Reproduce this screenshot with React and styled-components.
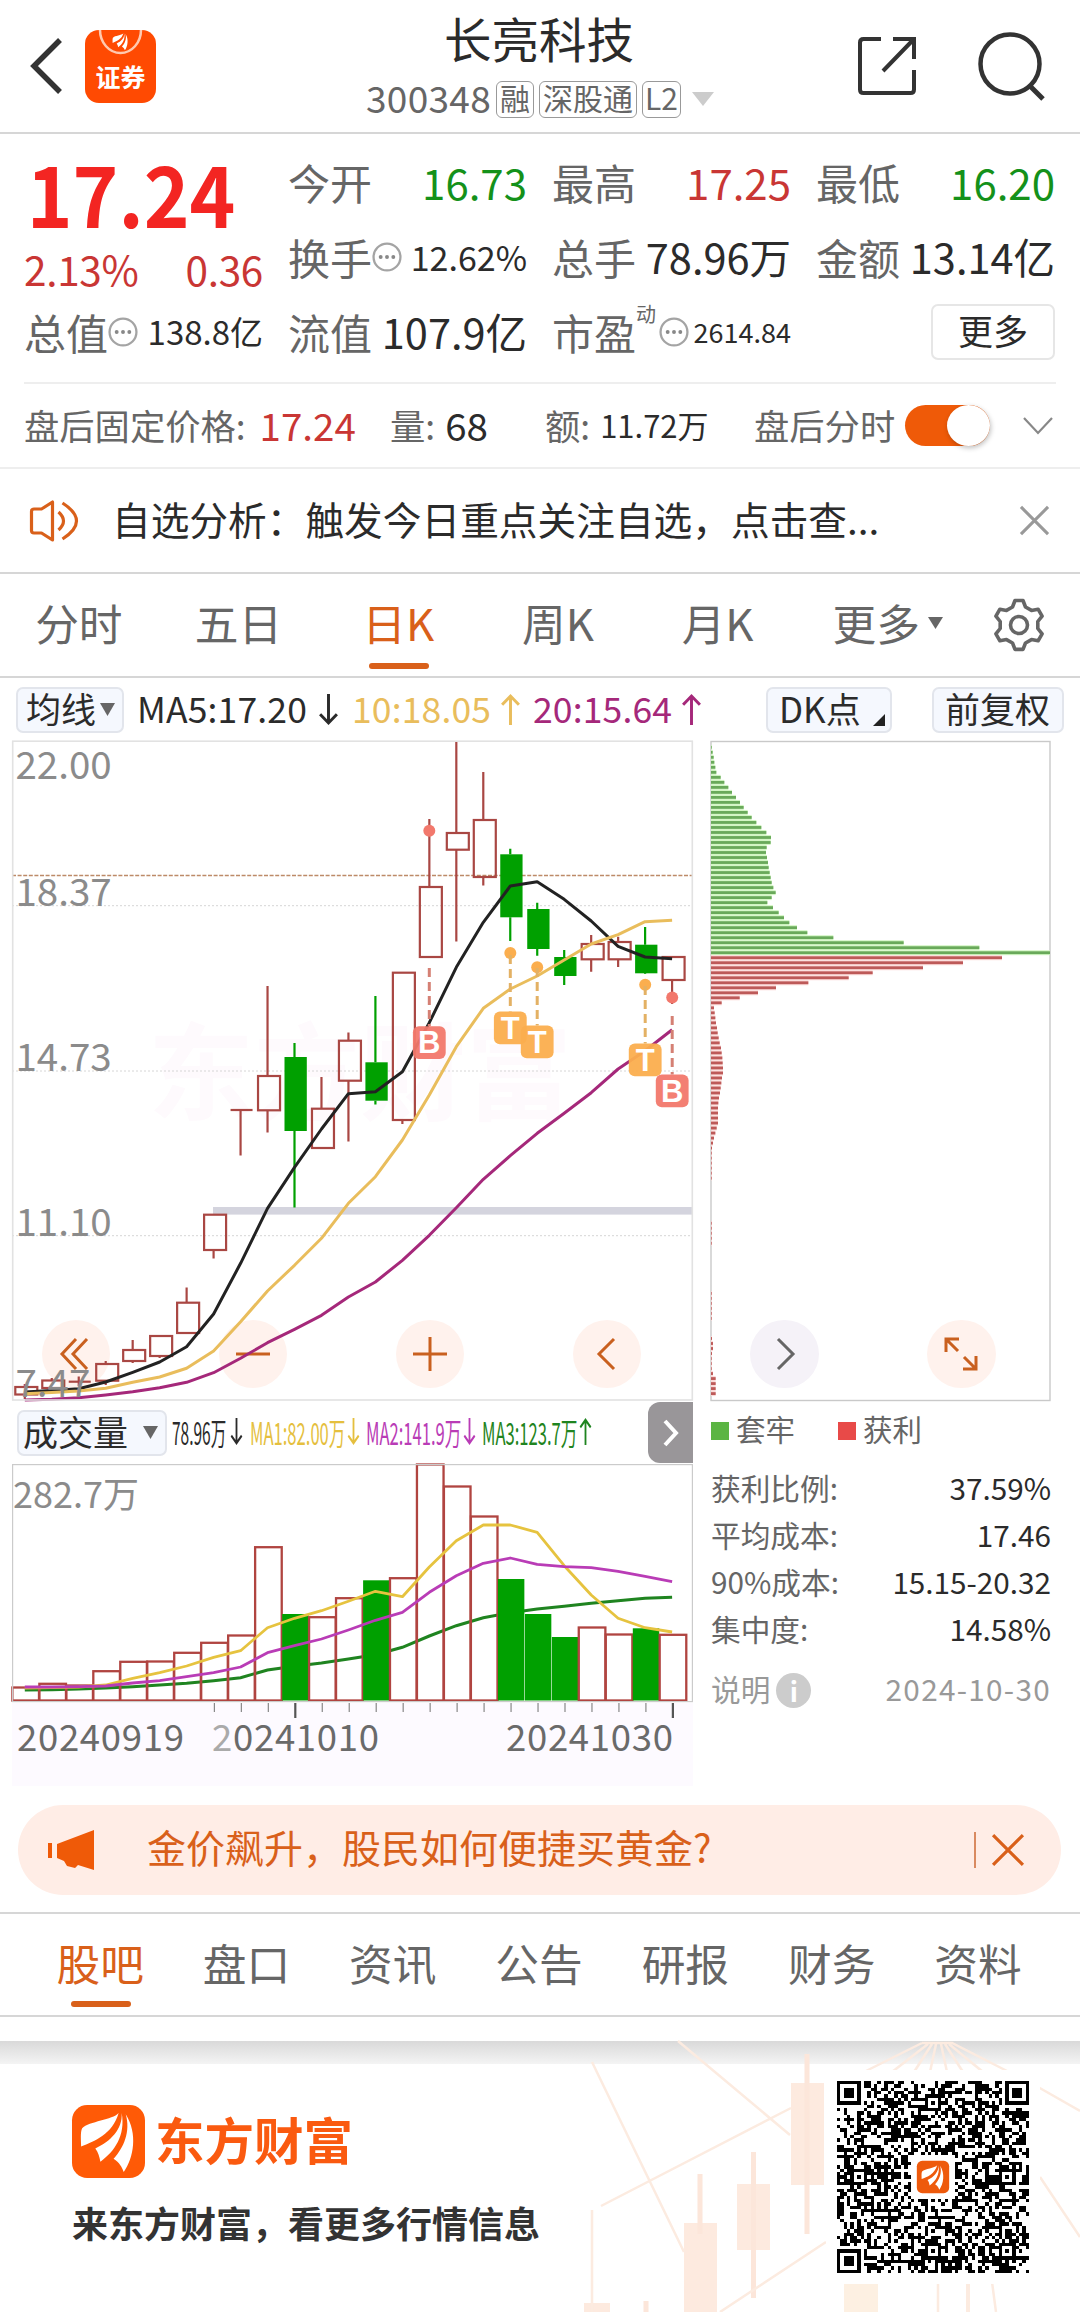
import React from "react";
import styled, { createGlobalStyle } from "styled-components";

const color = {
  orange: "#d9601a",
  red: "#c93634",
  candleRed: "#a94743",
  green: "#14911a",
  candleGreen: "#00a000",
  yellow: "#e9bd5c",
  purple: "#a5287a",
  label: "#666",
  text: "#2b2b2b",
  line: "#d6d6d6"
};

/* ---------- chart data ---------- */

const STEP = 26.97;
const cx = i => 24.8 + i * STEP;

// [high, top, bottom, low, down]
const candles = [
  [1384, 1387, 1394.5, 1399],
  [1378, 1380.5, 1388, 1389],
  [1376.5, 1381.7, 1381.7, 1386],
  [1361, 1364, 1380.7, 1385],
  [1340, 1350, 1361, 1363],
  [1336, 1336, 1356, 1358],
  [1287.5, 1302.7, 1333, 1333],
  [1214.7, 1214.7, 1250, 1258.5],
  [1110, 1110, 1110, 1155.5],
  [986, 1076, 1110.3, 1132.5],
  [1043, 1057, 1131, 1207.5, true],
  [1077, 1108.7, 1148, 1148],
  [1032.5, 1040.7, 1080.7, 1141.5],
  [996, 1062.3, 1100.7, 1104.5, true],
  [972.7, 972.7, 1120, 1124],
  [819, 887, 957, 957],
  [741, 833, 849.7, 941.5],
  [772, 820, 877, 885.5],
  [848.7, 854.3, 917.3, 941, true],
  [902.7, 909, 949, 955.7, true],
  [950, 957, 976, 985, true],
  [935, 944, 959.3, 971.7],
  [936.7, 942, 959.3, 967],
  [927, 944.7, 973.3, 974, true],
  [957, 957, 980, 1004]
];

const ma5 = [1392, 1390.5, 1388.7, 1382, 1372.3, 1362, 1346.7, 1314, 1263.3, 1208.3, 1167.3, 1129, 1093.7, 1091.7, 1071.7, 1022.7, 967.3, 922.3, 886, 881.7, 899.3, 921, 946.3, 957, 958.7];
const ma10 = [1393.7, 1392.5, 1391, 1388.3, 1382.3, 1377, 1368.3, 1351, 1321.7, 1291, 1265.3, 1238.3, 1203.3, 1176.7, 1140, 1095, 1046.7, 1008.3, 989, 976, 960, 944, 934.7, 921.7, 920.3];
const ma20 = [1400, 1399.2, 1397.7, 1395, 1391.7, 1387.7, 1382.3, 1372.7, 1358.3, 1342.7, 1329.3, 1315.3, 1297, 1282, 1260.3, 1235.3, 1207.7, 1179.3, 1155.7, 1133.3, 1113.3, 1092.7, 1069, 1050.7, 1029.7];

const volumes = [1687, 1683.3, 1685, 1670.7, 1661.3, 1661, 1652.3, 1642.3, 1635, 1546.7, 1614, 1616.7, 1597.7, 1580.3, 1577.7, 1464, 1486, 1516, 1579, 1614, 1637, 1627, 1634, 1628.3, 1634.3];
const vma1 = [1688, 1687.5, 1687, 1685, 1678.3, 1672.7, 1666, 1657.3, 1650.7, 1627.7, 1618.3, 1610.7, 1601.3, 1591.3, 1596.7, 1567, 1540.7, 1525, 1525, 1532.3, 1565.7, 1595, 1618.3, 1627.7, 1632];
const vma2 = [1687, 1687, 1686.7, 1686, 1683, 1680.7, 1676.7, 1672.7, 1667, 1652.7, 1645.7, 1639, 1630, 1620.3, 1612.3, 1592.3, 1575.7, 1563.3, 1558, 1564.3, 1566.7, 1567.7, 1571.3, 1576.3, 1581.7];
const vma3 = [1690, 1689.7, 1689, 1688, 1686.7, 1685, 1683.3, 1680.7, 1677.7, 1670, 1666.3, 1663, 1659, 1654.7, 1647.3, 1636, 1625.7, 1617.7, 1612.7, 1609, 1606.3, 1603.3, 1600.7, 1598.3, 1597.3];

const trapped = [2, 5, 8, 10, 13, 16, 29, 40, 52, 63, 75, 87, 98, 110, 122, 136, 151, 166, 180, 179, 167, 165, 168, 171, 173, 176, 179, 182, 187, 194, 182, 169, 186, 203, 219, 235, 258, 289, 367, 578, 805, 1017];
const profit = [873, 756, 636, 485, 413, 292, 195, 141, 86, 32, 9, 11, 13, 15, 18, 20, 23, 26, 30, 32, 34, 35, 36, 36, 33, 31, 29, 27, 24, 22, 21, 21, 21, 21, 17, 13, 9, 6, 3, 2, 2, 2, 2, 2, 2];
const tail = { 95: 2, 96: 2, 97: 2, 98: 2, 99: 2, 109: 2, 110: 2, 111: 2, 112: 2, 113: 2, 114: 2, 118: 3, 119: 6, 120: 6, 121: 3, 122: 2, 123: 2, 124: 2, 125: 6, 126: 14, 127: 14, 128: 14, 129: 14 };

const marks = [
  { type: "B", x: 429.3, dot: 830.7, from: 968, box: 1026.3 },
  { type: "T", x: 510.3, dot: 953, from: 955, box: 1011.5 },
  { type: "T", x: 537.2, dot: 967.3, from: 968, box: 1025.5 },
  { type: "T", x: 645.2, dot: 984.8, from: 986, box: 1043.5 },
  { type: "B", x: 672.2, dot: 997.4, from: 1016, box: 1074.5 }
];

const line = data => data.map((y, i) => `${cx(i).toFixed(1)},${y}`).join(" ");

/* ---------- charts ---------- */

const Candles = () => (
  <svg width="681" height="660" viewBox="12 741 681 660">
    <text x="148" y="1112" fontSize="106" fontWeight="700" fill="#fefafd">
      东方财富
    </text>
    <g stroke="#d6d6d6" strokeWidth="1" strokeDasharray="2 2">
      <path d="M12 905.7H692M12 1071H692M12 1235.7H692" />
    </g>
    <rect x="213" y="1207" width="479" height="7.6" fill="#d4d4de" />
    <path
      d="M12 875.5H692"
      stroke="#bd8a68"
      strokeWidth="1.3"
      strokeDasharray="4 1.6"
    />
    {candles.map(([high, top, bottom, low, down], i) => {
      const x = cx(i);
      const stroke = down ? color.candleGreen : color.candleRed;
      return (
        <g key={i} stroke={stroke} strokeWidth="2.2" fill="none">
          <path d={`M${x} ${high}V${top}M${x} ${bottom}V${low}`} />
          {down ? (
            <rect
              x={x - 10}
              y={top}
              width="22.3"
              height={bottom - top}
              fill={stroke}
              stroke="none"
            />
          ) : top === bottom ? (
            <path d={`M${x - 10} ${top}H${x + 12}`} />
          ) : (
            <rect x={x - 9.5} y={top} width="22" height={bottom - top} />
          )}
        </g>
      );
    })}
    <g fill="none" strokeWidth="3" strokeLinejoin="round">
      <polyline points={line(ma5)} stroke="#222" />
      <polyline points={line(ma10)} stroke={color.yellow} />
      <polyline points={line(ma20)} stroke={color.purple} />
    </g>
    {marks.map(({ type, x, dot, from, box }, i) => {
      const fill = type === "B" ? "#f2786c" : "#fbae4e";
      return (
        <g key={i}>
          <circle cx={x} cy={dot} r="6" fill={fill} />
          <path
            d={`M${x} ${from}V${box}`}
            stroke={type === "B" ? "#d58074" : "#e3b164"}
            strokeWidth="3"
            strokeDasharray="9 5"
          />
          <rect
            x={x - 16.4}
            y={box}
            width="32.8"
            height="32.8"
            rx="6"
            fill={fill}
            fillOpacity="0.95"
          />
          <text
            x={x}
            y={box + 27}
            fontSize="31"
            textAnchor="middle"
            fill="#fff"
            fontFamily="Liberation Sans"
            fontWeight="700"
          >
            {type}
          </text>
        </g>
      );
    })}
    <rect
      x="12.7"
      y="741.2"
      width="679.6"
      height="658.8"
      fill="none"
      stroke="#e2e2e2"
      strokeWidth="1.6"
    />
    <g fontSize="38.5" fill="#8b8b8b">
      <text x="15.5" y="779">22.00</text>
      <text x="15.5" y="905.5">18.37</text>
      <text x="15.5" y="1070.500">14.73</text>
      <text x="15.5" y="1235.500">11.10</text>
      <text x="15.5" y="1397">7.47</text>
    </g>
  </svg>
);

const Chips = () => {
  const rows = [...trapped, ...profit];
  return (
    <svg width="341" height="660" viewBox="710 741 341 660">
      <rect
        x="711"
        y="741.5"
        width="339"
        height="659"
        fill="none"
        stroke="#c9c9c9"
        strokeWidth="1.4"
      />
      {Array.from({ length: 130 }, (_, i) => {
        const w = (rows[i] || tail[i] || 0) / 3;
        const up = i < trapped.length;
        const y = 747.3 + i * 5.01;
        return w ? (
          <g key={i}>
            <rect
              x="711"
              y={y - 2.5}
              width={w}
              height="5"
              fill={up ? "#d3f6c4" : "#fbd9d7"}
            />
            <rect
              x="711"
              y={y - 1.4}
              width={w}
              height="2.8"
              fill={up ? "#69a95a" : "#bd5a59"}
            />
          </g>
        ) : null;
      })}
    </svg>
  );
};

const Volume = () => (
  <svg width="681" height="327" viewBox="12 1464 681 327">
    <rect x="12" y="1703" width="681" height="83" fill="#fdfaff" />
    <text x="13" y="1508" fontSize="36" fill="#8b8b8b">
      282.7万
    </text>
    <polyline
      points={line(vma3)}
      fill="none"
      stroke="#1f8420"
      strokeWidth="3"
    />
    {volumes.map((top, i) => {
      const x = cx(i);
      return candles[i][4] ? (
        <rect
          key={i}
          x={x - 12.3}
          y={top}
          width="26.4"
          height={1700.5 - top}
          fill={color.candleGreen}
        />
      ) : (
        <rect
          key={i}
          x={x - 12.4}
          y={top + 0.5}
          width="26.6"
          height={1700 - top}
          fill="none"
          stroke="#b04440"
          strokeWidth="2.3"
        />
      );
    })}
    <g fill="none" strokeWidth="2.8" strokeLinejoin="round">
      <polyline points={line(vma1)} stroke="#e6c33f" />
      <polyline points={line(vma2)} stroke="#b93cb6" />
    </g>
    <rect
      x="12.6"
      y="1464.6"
      width="679.8"
      height="237"
      fill="none"
      stroke="#cbcbcb"
      strokeWidth="1.2"
    />
    {candles.map((_, i) => {
      const major = i === 10 || i === 24;
      return i < 7 ? null : (
        <path
          key={i}
          d={`M${cx(i) + 0.8} 1703V${major ? 1718 : 1712}`}
          stroke={major ? "#555" : "#888"}
          strokeWidth={major ? 2.2 : 1.2}
        />
      );
    })}
    <g fontSize="36.5" fill="#6a6a6a">
      <text x="17" y="1751" letterSpacing="0.7">
        20240919
      </text>
      <text x="212" y="1751" letterSpacing="0.7">
        <tspan fill="#aaa">2</tspan>0241010
      </text>
      <text x="506" y="1751" letterSpacing="0.7">
        20241030
      </text>
    </g>
  </svg>
);

/* ---------- icons ---------- */

const Swoosh = ({ size, x, y }) => (
  <svg width={size} height={size} x={x} y={y} viewBox="0 0 72 72" fill="#fff">
    <path d="M46 8C40 15 17 16 10 23c-2 4-1 12-1 18 13-5 31-12 37-33z" />
    <path d="M49 8c1 16-11 28-26 35 3 4 4 8 5 13C42 46 53 30 49 8z" />
    <path d="M53 9c5 17-2 33-12 44 6 4 8 8 10 13 10-14 14-38 2-57z" />
  </svg>
);

const Logo = ({ size }) => (
  <svg width={size} height={size} viewBox="0 0 72 72">
    <rect width="72" height="72" rx="15" fill="#ff5a06" />
    <Swoosh size="72" />
  </svg>
);

const More = () => (
  <svg width="30" height="30" viewBox="0 0 29 29">
    <circle cx="14.5" cy="14.5" r="13" fill="none" stroke="#a4a4a4" strokeWidth="2.2" />
    <g fill="#888">
      <circle cx="8.4" cy="14.5" r="1.9" />
      <circle cx="14.5" cy="14.5" r="1.9" />
      <circle cx="20.6" cy="14.5" r="1.9" />
    </g>
  </svg>
);

const Gear = () => (
  <svg width="52" height="54" viewBox="0 0 52 54" fill="none" stroke="#666" strokeWidth="3.6">
    <path
      strokeLinejoin="round"
      d="M22 2.500h8l2.500 6.500 6 3.400 6.600-1.200 4 6.900-4.300 5.400v7l4.300 5.400-4 6.900-6.600-1.200-6 3.400-2.500 6.400h-8l-2.500-6.400-6-3.400-6.600 1.200-4-6.900 4.300-5.400v-7l-4.300-5.400 4-6.900 6.600 1.200 6-3.400z"
    />
    <circle cx="26" cy="27" r="8.500" />
  </svg>
);

const Cross = ({ size, stroke, width }) => (
  <svg width={size} height={size} viewBox="0 0 30 30" stroke={stroke} strokeWidth={width}>
    <path d="M1 1l28 28M29 1L1 29" />
  </svg>
);

const Arrow = ({ up, w = 21, h = 31 }) => (
  <svg width={w} height={h} viewBox="0 0 20 30" preserveAspectRatio="none" fill="none" stroke="currentColor" strokeWidth="2.800">
    <path d={up ? "M10 30V2M2 10.500l8-8.500 8 8.500" : "M10 0v28M2 19.500l8 8.500 8-8.500"} />
  </svg>
);

const Caret = ({ w = 15, h = 12, fill = "#666" }) => (
  <svg width={w} height={h} viewBox="0 0 15 12" preserveAspectRatio="none">
    <path d="M0 0h15L7.500 12z" fill={fill} />
  </svg>
);

const QrCode = () => {
  const n = 57;
  const cells = [];
  let seed = 20241030;
  const rand = () => {
    seed = (seed * 16807) % 2147483647;
    return seed / 2147483647;
  };
  const ring = (r, c, r0, c0, size) => {
    const d = Math.max(Math.abs(r - r0), Math.abs(c - c0));
    return d > size ? null : size === 4 ? d !== 4 && d !== 2 : d !== 1;
  };
  for (let r = 0; r < n; r++) {
    for (let c = 0; c < n; c++) {
      let on = rand() > 0.48;
      [[28, 6], [6, 28], [28, 50], [50, 28], [50, 50]].forEach(([a, b]) => {
        const v = ring(r, c, a, b, 2);
        if (v !== null) on = v;
      });
      [[3, 3], [3, 53], [53, 3]].forEach(([a, b]) => {
        const v = ring(r, c, a, b, 4);
        if (v !== null) on = v;
      });
      if (Math.abs(r - 28) < 6.500 && Math.abs(c - 28) < 6.500) on = false;
      if (on) cells.push(`M${c} ${r}h1v1h-1z`);
    }
  }
  return (
    <svg width="192" height="192" viewBox="0 0 57 57">
      <path d={cells.join("")} shapeRendering="crispEdges" />
      <rect x="23.700" y="23.700" width="9.600" height="9.600" rx="1.600" fill="#ee5a0c" />
      <Swoosh size="9" x="24" y="24" />
    </svg>
  );
};

const FooterArt = () => (
  <svg width="520" height="271" viewBox="560 2041 520 271" fill="none">
    <g fill="#fdeadf">
      <path d="M791 2083h33v102h-33zM737 2184h33v66h-33zM684 2223h33v89h-33zM584 2303h26v9h-26z" />
      <path d="M844 2282h34v30h-34z" fill="#fdf0e2" />
    </g>
    <g stroke="#fce6da" strokeWidth="5">
      <path d="M807 2054v180M753.500 2152v146M700 2174v60M646 2301v11" />
    </g>
    <g stroke="#fcebe0" strokeWidth="2.500">
      <path d="M678 2041l112 94M791 2108l-190 98M592 2062l92 190M720 2312l106-70M592 2210v102M1038 2087l42 24M1040 2177l40 60M938 2282v30M992 2282l4 30" />
      <path d="M968 2282v30" strokeWidth="4" />
      <path d="M922 2043h30l57 29M922 2043l-58 29M928 2044l-36 28M932 2044l-18 28M936 2044l-6 28M941 2044l6 28M945 2044l18 28M949 2044l34 28" />
    </g>
  </svg>
);

/* ---------- page ---------- */

const stageTabs = ["分时", "五日", "日K", "周K", "月K"];
const pageTabs = ["股吧", "盘口", "资讯", "公告", "研报", "财务", "资料"];

const stats = [
  ["获利比例:", "37.59%"],
  ["平均成本:", "17.46"],
  ["90%成本:", "15.15-20.32"],
  ["集中度:", "14.58%"]
];

const App = () => (
  <Page>
    <GlobalStyle />

    <Header>
      <HeaderLeft>
        <svg width="34" height="58" viewBox="0 0 34 58" fill="none" stroke="#333" strokeWidth="5.500">
          <path d="M31 3L5 29l26 26" />
        </svg>
        <Badge>
          <svg width="71" height="34" viewBox="0 0 71 34" fill="none">
            <path d="M15 0a20.500 23 0 0 0 41 0" stroke="#ffc9b0" strokeWidth="2.500" />
            <Swoosh size="21" x="25" y="1" />
          </svg>
          <span>证券</span>
        </Badge>
      </HeaderLeft>
      <HeaderTitle>
        <h1>长亮科技</h1>
        <Code>
          <span>300348</span>
          <Tag>融</Tag>
          <Tag>深股通</Tag>
          <Tag $latin>L2</Tag>
          <Caret w={22} h={14} fill="#ccc" />
        </Code>
      </HeaderTitle>
      <HeaderRight>
        <svg width="60" height="60" viewBox="0 0 60 60" fill="none" stroke="#333" strokeWidth="4">
          <path d="M24 3H6.500Q3 3 3 6.500v47Q3 57 6.500 57h47q3.500 0 3.500-3.500V34M36 3h21v20M57 3L26 35" />
        </svg>
        <svg width="70" height="70" viewBox="0 0 70 70" fill="none" stroke="#333" strokeWidth="4.500">
          <circle cx="33" cy="33" r="29.500" />
          <path d="M53 55l13 13" strokeWidth="5" />
        </svg>
      </HeaderRight>
    </Header>

    <Quote>
      <PriceCell>
        <Price>17.24</Price>
        <Change>
          <span>2.13%</span>
          <span>0.36</span>
        </Change>
      </PriceCell>
      <Cell>
        <Label>今开</Label>
        <Value $tone={color.green}>16.73</Value>
      </Cell>
      <Cell>
        <Label>最高</Label>
        <Value $tone={color.red}>17.25</Value>
      </Cell>
      <Cell>
        <Label>最低</Label>
        <Value $tone={color.green}>16.20</Value>
      </Cell>
      <Cell>
        <Label>
          换手
          <More />
        </Label>
        <Value $size={34}>12.62%</Value>
      </Cell>
      <Cell>
        <Label>总手</Label>
        <Value $size={41.5}>78.96万</Value>
      </Cell>
      <Cell>
        <Label>金额</Label>
        <Value $size={41.5}>13.14亿</Value>
      </Cell>
      <Cell>
        <Label>
          总值
          <More />
        </Label>
        <Value $size={33}>138.8亿</Value>
      </Cell>
      <Cell>
        <Label>流值</Label>
        <Value $size={41.5}>107.9亿</Value>
      </Cell>
      <Cell>
        <Label>
          市盈<Sup>动</Sup>
          <More />
        </Label>
        <Value $size={27}>2614.84</Value>
      </Cell>
      <Cell $end>
        <MoreButton>更多</MoreButton>
      </Cell>
    </Quote>

    <AfterHours>
      <Group $w={366}>
        盘后固定价格:<Em $tone={color.red} $gap={14}>17.24</Em>
      </Group>
      <Group $w={155}>
        量:<Em>68</Em>
      </Group>
      <Group $w={209}>
        额:<Em $size={31}>11.72万</Em>
      </Group>
      <Group $w={151}>盘后分时</Group>
      <Toggle>
        <i />
      </Toggle>
      <svg width="30" height="18" viewBox="0 0 30 18" fill="none" stroke="#888" strokeWidth="2.200">
        <path d="M1 1l14 15L29 1" />
      </svg>
    </AfterHours>

    <Notice>
      <svg width="51" height="42" viewBox="0 0 50 42" fill="none" stroke={color.orange} strokeWidth="3.200">
        <path d="M2 11.500Q2 9 4.500 9H12L23 2v38l-11-7H4.500Q2 33 2 30.500z" strokeLinejoin="round" />
        <path d="M29 12q10 9 0 18M33 3q28 18 0 36" />
      </svg>
      <p>自选分析：触发今日重点关注自选，点击查...</p>
      <Cross size={29} stroke="#999" width={3.2} />
    </Notice>

    <StageTabs>
      {stageTabs.map(tab => (
        <Tab key={tab} $active={tab === "日K"}>
          {tab}
        </Tab>
      ))}
      <Tab $nudge>
        更多
        <CaretWrap>
          <Caret />
        </CaretWrap>
      </Tab>
      <GearWrap>
        <Gear />
      </GearWrap>
    </StageTabs>

    <MaBar>
      <Chip $w={108}>
        均线
        <Caret w={15} h={13} />
      </Chip>
      <MaItem $w={215} $tone={color.text}>
        MA5:17.20
        <Arrow />
      </MaItem>
      <MaItem $w={181} $tone={color.yellow}>
        10:18.05
        <Arrow up />
      </MaItem>
      <MaItem $w={233} $tone={color.purple}>
        20:15.64
        <Arrow up />
      </MaItem>
      <Chip $w={126}>
        DK点
        <Corner width="12" height="12" viewBox="0 0 12 12">
          <path d="M12 0v12H0z" fill="#222" />
        </Corner>
      </Chip>
      <Chip $w={132} $push>
        前复权
      </Chip>
    </MaBar>

    <Board>
      <Controls>
        <Round $shift={-2}>
          <svg width="30" height="32" viewBox="0 0 30 32">
            <path d="M17 1L3 16l14 15M28 1L14 16l14 15" />
          </svg>
        </Round>
        <Round>
          <svg width="34" height="34" viewBox="0 0 34 34">
            <path d="M0 17h34" />
          </svg>
        </Round>
        <Round>
          <svg width="34" height="34" viewBox="0 0 34 34">
            <path d="M0 17h34M17 0v34" />
          </svg>
        </Round>
        <Round $shift={-1}>
          <svg width="18" height="32" viewBox="0 0 18 32">
            <path d="M17 1L2 16l15 15" />
          </svg>
        </Round>
        <Round $grey $shift={2}>
          <svg width="18" height="32" viewBox="0 0 18 32">
            <path d="M1 1l15 15L1 31" />
          </svg>
        </Round>
        <Round>
          <svg width="34" height="34" viewBox="0 0 34 34">
            <path d="M15 2H2v13M2 2l12 12M19 32h13V19M32 32L20 20" />
          </svg>
        </Round>
      </Controls>

      <Column>
        <Candles />
        <VolumeBar>
          <Chip $w={150} $gap={15}>
            成交量
            <Caret w={15} h={13} />
          </Chip>
          <VolItem $w={78} $text={55} $scale={0.5}>
            <b>78.96万</b>
            <Arrow w={13} h={27} />
          </VolItem>
          <VolItem $w={116} $text={94} $scale={0.535} $tone="#e5bf3e">
            <b>MA1:82.00万</b>
            <Arrow w={13} h={27} />
          </VolItem>
          <VolItem $w={116} $text={94} $scale={0.535} $tone="#b93cb6">
            <b>MA2:141.9万</b>
            <Arrow w={13} h={27} />
          </VolItem>
          <VolItem $w={116} $text={94} $scale={0.535} $tone="#1f8420">
            <b>MA3:123.7万</b>
            <Arrow up w={13} h={27} />
          </VolItem>
          <Expand>
            <svg width="18" height="28" viewBox="0 0 18 28" fill="none" stroke="#fff" strokeWidth="4">
              <path d="M3 2l11 12L3 26" />
            </svg>
          </Expand>
        </VolumeBar>
        <Volume />
      </Column>

      <Column>
        <Chips />
        <Legend>
          <Swatch $fill="#5bb543" />
          套牢
          <Swatch $fill="#e84a48" $second />
          获利
        </Legend>
        {stats.map(([label, value]) => (
          <Stat key={label}>
            {label}
            <span>{value}</span>
          </Stat>
        ))}
        <Stat $muted>
          说明
          <Info>i</Info>
          <span>2024-10-30</span>
        </Stat>
      </Column>
    </Board>

    <Banner>
      <svg width="46" height="40" viewBox="0 0 46 40" fill="#ef5a08">
        <path d="M0 13h4v15H0zM9 14L46 0v40l-16-5-3 3-8-2-3-5-7-3z" />
      </svg>
      <p>金价飙升，股民如何便捷买黄金?</p>
      <Rule />
      <Cross size={32} stroke={color.orange} width={3} />
    </Banner>

    <PageTabs>
      {pageTabs.map(tab => (
        <Tab key={tab} $active={tab === "股吧"} $low>
          {tab}
        </Tab>
      ))}
    </PageTabs>

    <Footer>
      <Art>
        <FooterArt />
      </Art>
      <Brand>
        <BrandRow>
          <Logo size={73} />
          <span>东方财富</span>
        </BrandRow>
        <p>来东方财富，看更多行情信息</p>
      </Brand>
      <QrBox>
        <QrCode />
      </QrBox>
    </Footer>
  </Page>
);

const GlobalStyle = createGlobalStyle`
  body {
    margin: 0;
    background: #fff;
  }
  * {
    box-sizing: border-box;
  }
  svg {
    display: block;
    flex: none;
    overflow: visible;
  }
`;

const Page = styled.div`
  width: 1080px;
  height: 2312px;
  overflow: hidden;
  display: flex;
  flex-direction: column;
  background: #fff;
  color: ${color.text};
  font-family: "Noto Sans CJK SC", sans-serif;
  line-height: 1;
  white-space: nowrap;
  p,
  h1 {
    margin: 0;
    font-weight: 400;
  }
`;

const Header = styled.header`
  height: 134px;
  flex: none;
  display: grid;
  grid-template-columns: 300px 1fr 300px;
  border-bottom: 2px solid ${color.line};
`;

const HeaderLeft = styled.div`
  display: flex;
  align-items: center;
  padding-left: 29px;
  gap: 22px;
`;

const Badge = styled.div`
  width: 71px;
  height: 73px;
  border-radius: 14px;
  background: #ff4a02;
  color: #fff;
  font-size: 25px;
  font-weight: 700;
  text-align: center;
  span {
    display: block;
    line-height: 24px;
  }
`;

const HeaderTitle = styled.div`
  display: flex;
  flex-direction: column;
  align-items: center;
  h1 {
    margin: 14px 0 0 -2px;
    font-size: 47.5px;
    line-height: 48px;
  }
`;

const Code = styled.div`
  display: flex;
  align-items: center;
  gap: 5px;
  margin-top: 18px;
  height: 38px;
  font-size: 37px;
  color: ${color.label};
  > span:first-child {
    padding-bottom: 4px;
    letter-spacing: 0.3px;
  }
  svg {
    margin-left: 6px;
  }
`;

const Tag = styled.span`
  height: 37px;
  padding: 0 ${({ $latin }) => ($latin ? 2 : 3)}px;
  border: 1.5px solid #999;
  border-radius: 6px;
  font-size: 30px;
  line-height: 31px;
`;

const HeaderRight = styled.div`
  display: flex;
  align-items: center;
  gap: 60px;
  padding-left: 77px;
`;

const Quote = styled.section`
  height: 250px;
  flex: none;
  display: grid;
  grid-template-columns: repeat(4, 239px);
  grid-template-rows: repeat(3, 75px);
  column-gap: 25px;
  margin: 0 24px;
  padding-top: 10px;
  border-bottom: 2px solid #eee;
`;

const PriceCell = styled.div`
  grid-row: span 2;
`;

const Price = styled.div`
  height: 88px;
  padding: 6px 0 0 3px;
  font-size: 84px;
  line-height: 84px;
  font-weight: 700;
  color: #f32522;
  transform: scaleX(0.925);
  transform-origin: left;
`;

const Change = styled.div`
  display: flex;
  justify-content: space-between;
  margin-top: 16px;
  font-size: 40.5px;
  line-height: 42px;
  letter-spacing: -0.3px;
  color: ${color.red};
`;

const Cell = styled.div`
  display: flex;
  align-items: center;
  justify-content: ${({ $end }) => ($end ? "flex-end" : "space-between")};
`;

const Label = styled.span`
  display: flex;
  align-items: center;
  font-size: 42px;
  color: ${color.label};
`;

const Sup = styled.sup`
  margin-right: 3px;
  font-size: 20px;
  line-height: 20px;
  transform: translateY(-18px);
`;

const Value = styled.span`
  font-size: ${({ $size }) => $size || 42}px;
  color: ${({ $tone }) => $tone || color.text};
`;

const MoreButton = styled.button`
  width: 124px;
  height: 56px;
  padding: 0 0 5px;
  border: 2px solid #e6e6e6;
  border-radius: 7px;
  background: #fff;
  color: ${color.text};
  font: inherit;
  font-size: 35px;
`;

const AfterHours = styled.section`
  height: 85px;
  flex: none;
  display: flex;
  align-items: center;
  padding-left: 24px;
  border-bottom: 2px solid #eee;
  > svg {
    margin-left: 33px;
  }
`;

const Group = styled.div`
  width: ${({ $w }) => $w}px;
  display: flex;
  align-items: center;
  padding-bottom: 2px;
  font-size: 35.3px;
  color: ${color.label};
`;

const Em = styled.span`
  margin-left: ${({ $gap }) => $gap || 10}px;
  font-size: ${({ $size }) => $size || 38.5}px;
  color: ${({ $tone }) => $tone || color.text};
`;

const Toggle = styled.div`
  width: 85px;
  height: 41px;
  display: flex;
  justify-content: flex-end;
  border-radius: 21px;
  background: #ef5a08;
  i {
    width: 43px;
    height: 41px;
    border-radius: 50%;
    background: #fff;
    box-shadow: 1px 2px 5px rgba(0, 0, 0, 0.25);
  }
`;

const Notice = styled.section`
  height: 105px;
  flex: none;
  display: flex;
  align-items: center;
  padding: 0 31px 0 29px;
  border-bottom: 2px solid ${color.line};
  p {
    flex: 1;
    padding: 0 0 5px 32px;
    font-size: 38.7px;
  }
`;

const StageTabs = styled.nav`
  height: 104px;
  flex: none;
  display: grid;
  grid-template-columns: repeat(6, 159.7px) 1fr;
  border-bottom: 2px solid ${color.line};
`;

const Tab = styled.div`
  position: relative;
  display: flex;
  align-items: center;
  justify-content: center;
  padding: 0 ${({ $nudge }) => ($nudge ? 0 : 2)}px 4px ${({ $nudge }) => ($nudge ? 4 : 0)}px;
  font-size: 43.7px;
  color: ${({ $active }) => ($active ? color.orange : color.label)};
  &::after {
    content: "";
    display: ${({ $active }) => ($active ? "block" : "none")};
    position: absolute;
    left: calc(50% - 30px);
    bottom: ${({ $low }) => ($low ? 8 : 7)}px;
    width: 60px;
    height: 6px;
    border-radius: 3px;
    background: ${color.orange};
  }
`;

const CaretWrap = styled.span`
  width: 0;
  padding-left: 8px;
`;

const GearWrap = styled.div`
  display: flex;
  align-items: center;
  padding-left: 35px;
`;

const MaBar = styled.section`
  height: 63px;
  flex: none;
  display: flex;
  align-items: center;
  padding: 0 16px;
`;

const Chip = styled.div`
  position: relative;
  width: ${({ $w }) => $w}px;
  height: 46px;
  flex: none;
  display: flex;
  align-items: center;
  gap: ${({ $gap }) => $gap || 4}px;
  margin-left: ${({ $push }) => ($push ? "auto" : 0)};
  padding: 0 0 5px ${({ $gap, $w }) => ($gap ? 4 : $w === 108 ? 8 : 11)}px;
  border: 2px solid #e2e5ec;
  border-radius: 7px;
  background: #f5f8fe;
  font-size: 35px;
  > svg {
    margin-top: 5px;
  }
`;

const Corner = styled.svg`
  position: absolute;
  right: 5px;
  bottom: 5px;
`;

const MaItem = styled.div`
  width: ${({ $w }) => $w}px;
  display: flex;
  align-items: center;
  gap: 9px;
  padding-bottom: 4px;
  font-size: 35.5px;
  letter-spacing: 0.15px;
  color: ${({ $tone }) => $tone};
  svg {
    margin-top: 3px;
  }
  &:nth-child(2) {
    margin-left: 13px;
    gap: 11px;
  }
`;

const Board = styled.section`
  position: relative;
  height: 1064px;
  flex: none;
  display: grid;
  grid-template-columns: 681px 341px;
  column-gap: 17px;
  padding-left: 12px;
`;

/* floating buttons drawn beneath the curves */
const Controls = styled.div`
  position: absolute;
  left: 42px;
  top: 579px;
  display: flex;
  gap: 108.9px;
`;

const Round = styled.div`
  width: 68.2px;
  height: 68.2px;
  display: flex;
  align-items: center;
  justify-content: center;
  border-radius: 50%;
  background: ${({ $grey }) => ($grey ? "#f5f2f8" : "#fff2ed")};
  svg {
    margin-left: ${({ $shift }) => ($shift || 0) * 2}px;
    fill: none;
    stroke: ${({ $grey }) => ($grey ? "#666" : "#c9601f")};
    stroke-width: 3;
  }
`;

const Column = styled.div`
  position: relative;
`;

const VolumeBar = styled.div`
  height: 63px;
  display: flex;
  align-items: center;
  padding-left: 5px;
`;

const VolItem = styled.div`
  width: ${({ $w }) => $w}px;
  display: flex;
  align-items: center;
  gap: 3px;
  padding-bottom: 3px;
  font-size: 31px;
  color: ${({ $tone }) => $tone || color.text};
  b {
    width: ${({ $text }) => $text}px;
    font-weight: 400;
    transform: scaleX(${({ $scale }) => $scale});
    transform-origin: left;
  }
  &:nth-child(2) {
    margin-left: 5px;
  }
`;

const Expand = styled.div`
  width: 45px;
  height: 61px;
  display: flex;
  align-items: center;
  justify-content: center;
  margin-left: auto;
  border-radius: 12px 0 0 12px;
  background: #999699;
`;

const Legend = styled.div`
  height: 65px;
  display: flex;
  align-items: center;
  padding: 0 0 9px 1px;
  font-size: 29.5px;
  color: ${color.label};
`;

const Swatch = styled.i`
  width: 18px;
  height: 18px;
  margin: 4px 7px 0 ${({ $second }) => ($second ? 43 : 0)}px;
  background: ${({ $fill }) => $fill};
`;

const Stat = styled.div`
  height: 47px;
  display: flex;
  align-items: center;
  margin-top: ${({ $muted }) => ($muted ? 13 : 0)}px;
  padding: 0 0 4px 1px;
  font-size: 29.7px;
  color: ${({ $muted }) => ($muted ? "#999" : color.label)};
  > span {
    margin-left: auto;
    color: ${({ $muted }) => ($muted ? "#999" : color.text)};
    letter-spacing: ${({ $muted }) => ($muted ? 1.3 : 0)}px;
  }
`;

const Info = styled.i`
  width: 35px;
  height: 35px;
  margin: 3px 0 0 6px;
  border-radius: 50%;
  background: #ccc;
  color: #fff;
  font: 700 27px/35px "Noto Sans CJK SC", sans-serif;
  text-align: center;
`;

const Banner = styled.section`
  height: 90px;
  flex: none;
  display: flex;
  align-items: center;
  margin: 0 19px 0 18px;
  padding: 0 37px 0 30px;
  border-radius: 45px;
  background: #ffede6;
  color: ${color.orange};
  p {
    flex: 1;
    padding: 0 0 7px 53px;
    font-size: 39px;
  }
`;

const Rule = styled.i`
  width: 2px;
  height: 36px;
  margin-right: 16px;
  background: #d98a60;
`;

const PageTabs = styled.nav`
  height: 105px;
  flex: none;
  display: grid;
  grid-template-columns: repeat(7, 146.3px);
  margin-top: 17px;
  padding-left: 28px;
  border-top: 2px solid ${color.line};
  border-bottom: 2px solid ${color.line};
`;

const Footer = styled.footer`
  position: relative;
  height: 271px;
  flex: none;
  display: flex;
  justify-content: space-between;
  align-items: flex-start;
  margin-top: 24px;
  padding: 29px 40px 0 72px;
  background: linear-gradient(#d9d9d9, #f4f4f4 23px, #fff 23px);
`;

const Art = styled.div`
  position: absolute;
  right: 0;
  top: 0;
`;

const Brand = styled.div`
  padding-top: 35px;
  p {
    margin-top: 26px;
    font-size: 36px;
    font-weight: 700;
    color: #333;
  }
`;

const BrandRow = styled.div`
  display: flex;
  align-items: center;
  gap: 10px;
  font-size: 49.5px;
  font-weight: 700;
  color: #fa5a10;
  span {
    padding-bottom: 6px;
  }
`;

const QrBox = styled.div`
  position: relative;
  padding: 11px;
  background: #fff;
`;

export default App;
